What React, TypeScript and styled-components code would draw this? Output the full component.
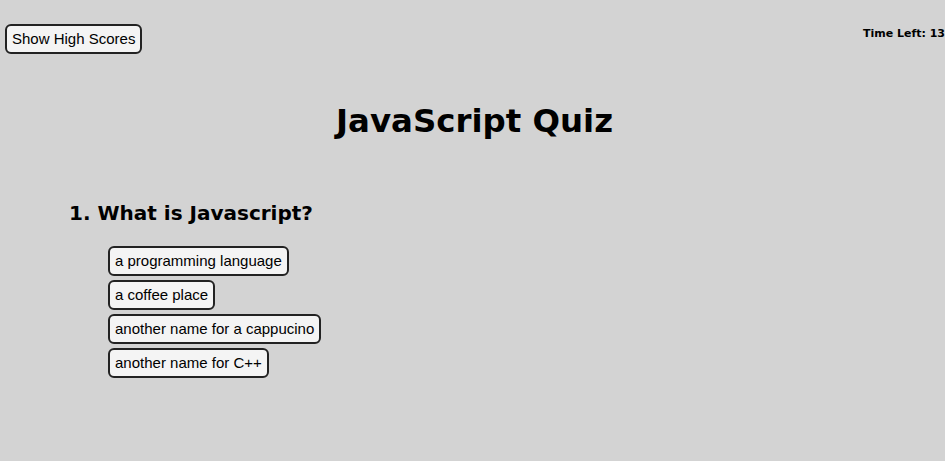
import React from "react";
import styled, { createGlobalStyle } from "styled-components";

const GlobalStyle = createGlobalStyle`
  html, body {
    margin: 0;
    padding: 0;
    background: #d3d3d3;
    overflow: hidden;
  }
`;

const Page = styled.div`
  width: 945px;
  height: 461px;
  padding-top: 24px;
  box-sizing: border-box;
  background: #d3d3d3;
  color: #000;
`;

const TopBar = styled.header`
  display: flex;
  justify-content: space-between;
  align-items: flex-start;
  padding-left: 5px;
`;

const Button = styled.button`
  font-family: "Liberation Sans", Arial, sans-serif;
  font-size: 15px;
  line-height: 18px;
  padding: 4px 5px;
  background: #f4f4f4;
  color: #000;
  border: 2px solid #222;
  border-radius: 6px;
  cursor: pointer;
  text-align: left;
`;

const Timer = styled.div`
  font-family: "DejaVu Sans", Verdana, sans-serif;
  font-weight: bold;
  font-size: 11px;
  margin-top: 3px;
  white-space: nowrap;
`;

const Title = styled.h1`
  font-family: "DejaVu Sans", Verdana, sans-serif;
  font-size: 32.4px;
  font-weight: bold;
  text-align: center;
  margin: 48px 0 0;
  padding-left: 4px;
`;

const Question = styled.section`
  margin-top: 61px;
  padding-left: 69px;
`;

const QuestionText = styled.h2`
  font-family: "DejaVu Sans", Verdana, sans-serif;
  font-size: 20px;
  font-weight: bold;
  margin: 0;
`;

const Options = styled.div`
  display: flex;
  flex-direction: column;
  align-items: flex-start;
  gap: 4px;
  margin-top: 21px;
  padding-left: 39px;
`;

const options = [
  "a programming language",
  "a coffee place",
  "another name for a cappucino",
  "another name for C++",
];

export default function App() {
  return (
    <Page>
      <GlobalStyle />
      <TopBar>
        <Button>Show High Scores</Button>
        <Timer>Time Left: 13</Timer>
      </TopBar>
      <Title>JavaScript Quiz</Title>
      <Question>
        <QuestionText>1. What is Javascript?</QuestionText>
        <Options>
          {options.map((o) => (
            <Button key={o}>{o}</Button>
          ))}
        </Options>
      </Question>
    </Page>
  );
}
